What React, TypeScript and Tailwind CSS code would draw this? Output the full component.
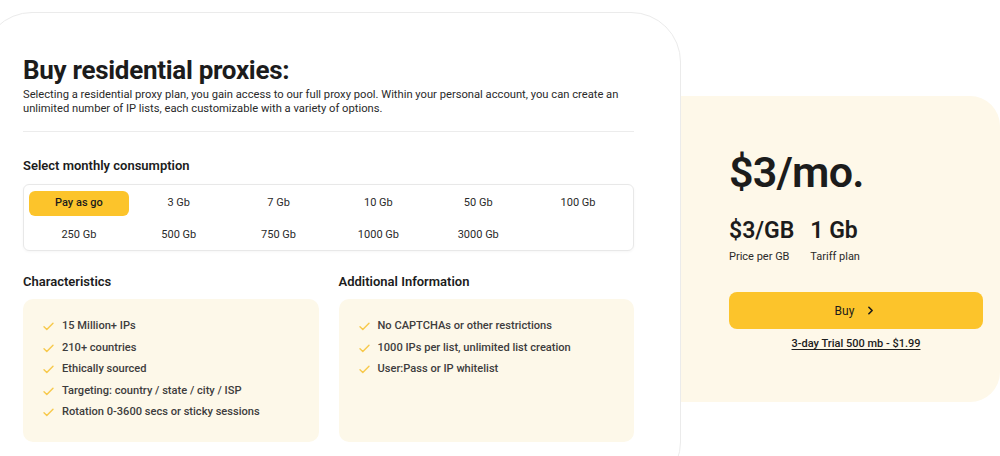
import { ChevronRight } from "lucide-react";

const volumes = [
  "Pay as go",
  "3 Gb",
  "7 Gb",
  "10 Gb",
  "50 Gb",
  "100 Gb",
  "250 Gb",
  "500 Gb",
  "750 Gb",
  "1000 Gb",
  "3000 Gb",
];

const characteristics = [
  "15 Million+ IPs",
  "210+ countries",
  "Ethically sourced",
  "Targeting: country / state / city / ISP",
  "Rotation 0-3600 secs or sticky sessions",
];

const additional = [
  "No CAPTCHAs or other restrictions",
  "1000 IPs per list, unlimited list creation",
  "User:Pass or IP whitelist",
];

function Check() {
  return (
    <svg width="11" height="9" viewBox="0 0 11 9" fill="none" className="shrink-0">
      <path d="M1 4.8 L3.8 7.6 L10 1.2" stroke="#f7c94b" strokeWidth="1.4" strokeLinecap="round" strokeLinejoin="round" />
    </svg>
  );
}

function FeatureList({ title, items }: { title: string; items: string[] }) {
  return (
    <div className="flex flex-1 flex-col">
      <h3 className="h-[18px] text-[13px] font-semibold leading-[18px] text-[#1c1c1c]">{title}</h3>
      <ul className="mt-[8px] h-[143px] rounded-[10px] bg-[#fdf8e9] pl-[20px] pt-[17px]">
        {items.map((item) => (
          <li key={item} className="flex h-[21.5px] items-center gap-[8px] text-[11.1px] font-medium text-[#3d3d3d]">
            <Check />
            <span>{item}</span>
          </li>
        ))}
      </ul>
    </div>
  );
}

export default function App() {
  return (
    <div className="h-[456px] w-[1000px] overflow-hidden bg-white font-['Roboto',sans-serif] text-[#1c1c1c]">
      <div className="flex items-start pt-[12px]">
        <section className="relative z-10 -ml-[18px] h-[480px] w-[699px] shrink-0 rounded-[50px] border border-[#ebebeb] bg-white pl-[40px] pr-[46px] pt-[42px]">
          <h1 className="text-[26px] font-bold leading-[30px] tracking-[-0.3px]">Buy residential proxies:</h1>
          <p className="mt-[3px] text-[11.2px] leading-[14px] text-[#2a2a2a]">
            Selecting a residential proxy plan, you gain access to our full proxy pool. Within your personal account, you can create an
            unlimited number of IP lists, each customizable with a variety of options.
          </p>
          <div className="mt-[15px] border-t border-[#ececec]" />

          <h2 className="mt-[25px] text-[13px] font-semibold leading-[18px]">Select monthly consumption</h2>
          <div className="mt-[9px] grid h-[67px] grid-cols-6 gap-y-[4px] rounded-[6px] border border-[#e8e8e8] px-[5px] pt-[6px] shadow-[0_1px_3px_rgba(0,0,0,0.04)]">
            {volumes.map((v, i) => (
              <button
                key={v}
                type="button"
                className={`flex h-[25px] items-center justify-center rounded-[6px] text-[11px] ${
                  i === 0 ? "bg-[#fcc42b] font-medium text-[#1c1c1c]" : "text-[#2a2a2a]"
                }`}
              >
                {v}
              </button>
            ))}
          </div>

          <div className="mt-[22px] flex gap-[20px]">
            <FeatureList title="Characteristics" items={characteristics} />
            <FeatureList title="Additional Information" items={additional} />
          </div>
        </section>

        <aside className="-ml-[41px] mt-[84px] h-[306px] flex-1 rounded-[30px] bg-[#fef8e9] pl-[89px] pr-[17px] pt-[55px]">
          <div className="text-[43px] font-semibold leading-none tracking-[-0.8px]">$3/mo.</div>
          <div className="mt-[25px] flex gap-[16px]">
            <div className="flex flex-col">
              <span className="text-[23px] font-semibold leading-none">$3/GB</span>
              <span className="mt-[8px] text-[11px] leading-[14px] text-[#2a2a2a]">Price per GB</span>
            </div>
            <div className="flex flex-col">
              <span className="text-[23px] font-semibold leading-none">1 Gb</span>
              <span className="mt-[8px] text-[11px] leading-[14px] text-[#2a2a2a]">Tariff plan</span>
            </div>
          </div>
          <button
            type="button"
            className="mt-[28px] flex h-[37px] w-full items-center justify-center gap-[10px] rounded-[8px] bg-[#fcc42b] text-[12px] text-[#1c1c1c]"
          >
            Buy
            <ChevronRight size={13} strokeWidth={3} />
          </button>
          <div className="mt-[1px] text-center">
            <a href="#" className="text-[11px] font-medium leading-[14px] text-[#1c1c1c] underline underline-offset-2">
              3-day Trial 500 mb - $1.99
            </a>
          </div>
        </aside>
      </div>
    </div>
  );
}
